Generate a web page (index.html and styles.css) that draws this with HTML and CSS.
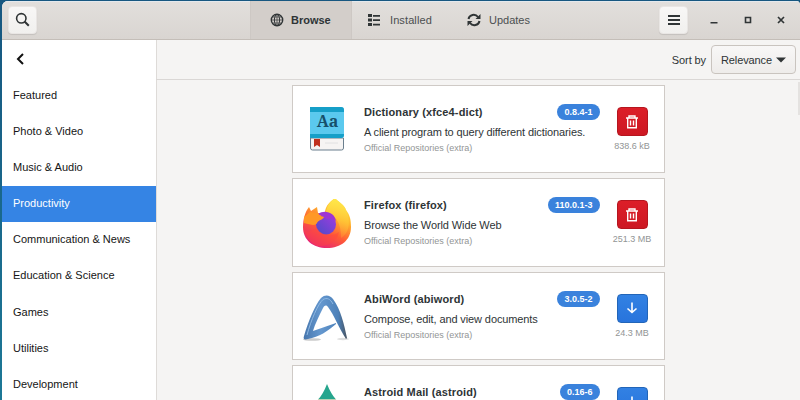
FILE: index.html
```html
<!DOCTYPE html>
<html lang="en">
<head>
  <meta charset="UTF-8">
  <meta name="viewport" content="width=device-width, initial-scale=1.0">
  <title>Software</title>
  <link rel="stylesheet" href="styles.css">
</head>
<body>
  <div class="window">
    <header class="headerbar">
      <div class="header-left">
        <button class="header-btn" aria-label="Search">
          <svg width="16" height="16" viewBox="0 0 16 16" fill="none" stroke="#303536" stroke-width="1.6"><circle cx="6.3" cy="6.3" r="4.7"/><path d="M9.500 9.500l4.300 4.300" stroke-width="2"/></svg>
        </button>
      </div>
      <nav class="tabs">
        <a class="tab active">
          <svg width="14" height="14" viewBox="0 0 14 14" fill="none" stroke="#303536" stroke-width="1"><circle cx="7" cy="7" r="5.700" stroke-width="1.400"/><ellipse cx="7" cy="7" rx="2.600" ry="5.500"/><path d="M7 1v12M1 7h12M2.500 4h9M2.500 10h9" stroke-width=".7"/></svg>
          <span>Browse</span>
        </a>
        <a class="tab tab-installed">
          <svg width="14" height="14" viewBox="0 0 14 14" fill="#303536"><path d="M1 1h4v3H1zM1 5.500h4v3H1zM1 10h4v3H1zM6 2h7v1.700H6zM6 6.300h7V8H6zM6 10.800h7v1.700H6z"/></svg>
          <span>Installed</span>
        </a>
        <a class="tab tab-updates">
          <svg width="14" height="14" viewBox="0 0 14 14" fill="none" stroke="#303536" stroke-width="2"><path d="M1.500 6C2.300 1.700 8.200.3 11 4M12.500 8C11.700 12.300 5.800 13.700 3 10"/><path d="M13.500 1v5h-5zM.5 13V8h5z" fill="#303536" stroke="none"/></svg>
          <span>Updates</span>
        </a>
      </nav>
      <div class="header-right">
        <button class="header-btn" aria-label="Menu">
          <svg width="14" height="12" viewBox="0 0 14 12" stroke="#303536" stroke-width="1.900"><path d="M1 2h12M1 6h12M1 10h12"/></svg>
        </button>
        <div class="window-controls">
          <svg width="10" height="10" viewBox="0 0 10 10" stroke="#303536" stroke-width="1.500"><path d="M1.500 7.700h7"/></svg>
          <svg width="10" height="10" viewBox="0 0 10 10" fill="none" stroke="#303536" stroke-width="1.600"><path d="M2.500 2.500h5v5h-5z"/></svg>
          <svg width="10" height="10" viewBox="0 0 10 10" stroke="#303536" stroke-width="1.700"><path d="M2 2l6 6M8 2l-6 6"/></svg>
        </div>
      </div>
    </header>

    <div class="main">
      <aside class="sidebar">
        <div class="back">
          <svg width="10" height="12" viewBox="0 0 10 12" fill="none" stroke="#111" stroke-width="2"><path d="M8 1L3 6l5 5"/></svg>
        </div>
        <ul class="categories">
          <li>Featured</li>
          <li>Photo &amp; Video</li>
          <li>Music &amp; Audio</li>
          <li class="selected">Productivity</li>
          <li>Communication &amp; News</li>
          <li>Education &amp; Science</li>
          <li>Games</li>
          <li>Utilities</li>
          <li>Development</li>
        </ul>
      </aside>

      <section class="content">
        <div class="toolbar">
          <span class="sort-label">Sort by</span>
          <button class="sort-btn">
            <span>Relevance</span>
            <svg width="10" height="6" viewBox="0 0 10 6" fill="#303536"><path d="M0 .5h10L5 5.500z"/></svg>
          </button>
        </div>

        <div class="app-list">
          <article class="card">
            <svg class="app-icon" width="48" height="48" viewBox="0 0 48 48">
              <path d="M7.500 32h33v10q0 2-2 2h-29q-2 0-2-2z" fill="#f6f4f3" stroke="#6b7f8e"/>
              <path d="M7 1h31q3 0 3 3v25q0 3-3 3H7z" fill="#5bc9ee"/>
              <path d="M7 1h31q3 0 3 3v2H7zM7 28h34v1q0 3-3 3H7z" fill="#169fc8"/>
              <path d="M11 33h6v8l-3-2-3 2z" fill="#c0301e"/>
              <path d="M22 37h13" stroke="#ddd" stroke-width=".8"/>
              <text x="24.500" y="21" class="dict-text" text-anchor="middle">Aa</text>
            </svg>
            <div class="info">
              <h2>Dictionary (xfce4-dict)</h2>
              <p class="summary">A client program to query different dictionaries.</p>
              <p class="repo">Official Repositories (extra)</p>
            </div>
            <span class="version">0.8.4-1</span>
            <div class="action">
              <button class="remove" aria-label="Remove">
                <svg width="14" height="16" viewBox="0 0 14 16" fill="none" stroke="#fff" stroke-width="1.400"><path d="M1 4h12M4 4V2h6v2M2.700 4.500v9.300h8.600V4.500M5.500 6.500v5M8.500 6.500v5"/></svg>
              </button>
              <span class="size">838.6 kB</span>
            </div>
          </article>

          <article class="card">
            <svg class="app-icon" width="50" height="52" viewBox="0 0 50 52">
              <defs>
                <linearGradient id="fox" x1=".85" y1="0" x2=".3" y2="1">
                  <stop offset="0" stop-color="#fff04a"/>
                  <stop offset=".35" stop-color="#ffb22c"/>
                  <stop offset=".65" stop-color="#ff5b36"/>
                  <stop offset="1" stop-color="#e4207a"/>
                </linearGradient>
                <linearGradient id="globe" x1="1" y1="0" x2="0" y2="1">
                  <stop offset="0" stop-color="#a33ae0"/>
                  <stop offset="1" stop-color="#4a4cc8"/>
                </linearGradient>
                <linearGradient id="flame" x1="0" y1="0" x2="0" y2="1">
                  <stop offset="0" stop-color="#ffe84a"/>
                  <stop offset="1" stop-color="#ffc234" stop-opacity=".2"/>
                </linearGradient>
              </defs>
              <path d="M33-1c3 4 9 6 11 12 4 5 5 10 5 17 0 13-10 21-24 21S1 41 1 28C1 20 3 13 7 8l2 4 6-4 1 6h7c0-6 4-11 10-15z" fill="url(#fox)"/>
              <path d="M33-1c3 4 9 6 11 12 4 8 5 22-5 28 0-9-2-17-6-20-4-3-7-3-9-5 0-6 4-11 9-15z" fill="url(#flame)"/>
              <circle cx="24" cy="25.500" r="10" fill="url(#globe)"/>
              <path d="M16 15c7-5 17-1 18 7-4-3-6-2-9-2z" fill="#9e35d4"/>
              <path d="M2 18l6-5 8 1c1 2 2 3 6 4-1 3-6 3-7 6-1 3-6 2-13 0z" fill="#ff9826"/>
              <path d="M2 28c2 7 5 5 13 1 4 8 16 9 22 4-2 11-13 15-22 14C8 44 2 36 2 28z" fill="#ff463f" opacity=".45"/>
            </svg>
            <div class="info">
              <h2>Firefox (firefox)</h2>
              <p class="summary">Browse the World Wide Web</p>
              <p class="repo">Official Repositories (extra)</p>
            </div>
            <span class="version">110.0.1-3</span>
            <div class="action">
              <button class="remove" aria-label="Remove">
                <svg width="14" height="16" viewBox="0 0 14 16" fill="none" stroke="#fff" stroke-width="1.400"><path d="M1 4h12M4 4V2h6v2M2.700 4.500v9.300h8.600V4.500M5.500 6.500v5M8.500 6.500v5"/></svg>
              </button>
              <span class="size">251.3 MB</span>
            </div>
          </article>

          <article class="card">
            <svg class="app-icon" width="48" height="48" viewBox="0 0 48 48">
              <defs>
                <linearGradient id="abi" x1="0" y1="0" x2="1" y2="0">
                  <stop offset="0" stop-color="#4776ad"/>
                  <stop offset=".4" stop-color="#6598cf"/>
                  <stop offset=".8" stop-color="#4c80b8"/>
                  <stop offset="1" stop-color="#49535f"/>
                </linearGradient>
              </defs>
              <ellipse cx="9" cy="46.500" rx="9" ry="1.300" fill="#ccc"/>
              <ellipse cx="40" cy="46" rx="6" ry="1.200" fill="#ddd"/>
              <path d="M1 43C5 29 12 12 18 5c4-4 9-3 12 1 8 11 11 25 14 39l-1 1C36 35 31 22 25 14c-2-2-3-2-5 1-4 8-8 16-10 23l23-8v1C25 38 16 44 5 46c-4 1-5 0-4-3z" fill="url(#abi)"/>
              <path d="M4 42C8 27 15 11 20 6.500c4-2 7-1 10 4.500" fill="none" stroke="#8fb9e3" stroke-width="1"/>
            </svg>
            <div class="info">
              <h2>AbiWord (abiword)</h2>
              <p class="summary">Compose, edit, and view documents</p>
              <p class="repo">Official Repositories (extra)</p>
            </div>
            <span class="version">3.0.5-2</span>
            <div class="action">
              <button class="install" aria-label="Install">
                <svg width="14" height="14" viewBox="0 0 14 14" fill="none" stroke="#fff" stroke-width="1.600"><path d="M7 1.500v10M2.500 7.500L7 11.500l4.500-4"/></svg>
              </button>
              <span class="size">24.3 MB</span>
            </div>
          </article>

          <article class="card">
            <svg class="app-icon astroid" width="48" height="48" viewBox="0 0 48 48">
              <path d="M24-3q4 10 9 15.500H15q5-5 9-15.500z" fill="#26a58d"/>
              <path d="M15 12.500h18l4 14H11z" fill="#e3d3a4"/>
            </svg>
            <div class="info">
              <h2>Astroid Mail (astroid)</h2>
            </div>
            <span class="version">0.16-6</span>
            <div class="action">
              <button class="install" aria-label="Install">
                <svg width="14" height="14" viewBox="0 0 14 14" fill="none" stroke="#fff" stroke-width="1.600"><path d="M7 1.500v10M2.500 7.500L7 11.500l4.500-4"/></svg>
              </button>
            </div>
          </article>
        </div>
        <div class="scrollbar"></div>
      </section>
    </div>
  </div>
</body>
</html>
```
FILE: styles.css
```css
* {
  margin: 0;
  padding: 0;
  box-sizing: border-box;
}

body {
  width: 800px;
  height: 400px;
  padding: 1px 0 0 2px;
  overflow: hidden;
  background: linear-gradient(to bottom, #175780, #1c7896);
  font-family: "Liberation Sans", Arial, sans-serif;
  font-size: 11px;
  color: #2e3436;
}

button {
  font: inherit;
  color: inherit;
}

svg {
  display: block;
  flex: none;
}

.window {
  height: 399px;
  display: flex;
  flex-direction: column;
  border-radius: 6px 4px 0 0;
  overflow: hidden;
  background: #f5f4f3;
}

/* Header bar */
.headerbar {
  flex: none;
  height: 39px;
  display: grid;
  grid-template-columns: 248px 1fr 141px;
  background: linear-gradient(to bottom, #e2dfdc, #d9d5d1);
  border-bottom: 1px solid #c4beb8;
  box-shadow: inset 0 1px #e4e9ed;
}

.header-left {
  display: flex;
  align-items: center;
  padding-left: 6px;
}

.header-btn {
  width: 29px;
  height: 28px;
  display: flex;
  align-items: center;
  justify-content: center;
  border: 1px solid #e9e6e4;
  border-radius: 4px;
  background: linear-gradient(to bottom, #f8f7f6, #f1f0ee);
  box-shadow: 0 1px 1px rgba(0, 0, 0, 0.1);
}

.tabs {
  display: flex;
}

.tab {
  display: flex;
  align-items: center;
  gap: 7px;
  color: #4b4f50;
}

.tab.active {
  width: 102px;
  padding-left: 19px;
  border-left: 1px solid #cdc8c4;
  border-right: 1px solid #cdc8c4;
  background: #d3ceca;
  color: #2e3436;
  font-weight: bold;
}

.tab-installed {
  width: 99px;
  padding-left: 15px;
  gap: 9px;
  letter-spacing: 0.1px;
}

.tab-updates {
  padding-left: 16px;
  gap: 8px;
}

.header-right {
  display: flex;
  align-items: center;
}

.window-controls {
  display: flex;
  gap: 23.5px;
  margin-left: 21px;
}

.main {
  flex: 1;
  min-height: 0;
  display: flex;
}

/* Sidebar */
.sidebar {
  flex: none;
  width: 154px;
  background: #fff;
  box-shadow: 1px 0 #dedbd8;
  color: #151515;
}

.back {
  height: 38px;
  padding: 13px 0 0 13px;
}

.categories {
  list-style: none;
}

.categories li {
  height: 36.1px;
  padding-left: 11px;
  line-height: 35.4px;
}

.categories .selected {
  background: #3584e4;
  color: #fff;
}

/* Content */
.content {
  position: relative;
  flex: 1;
  min-width: 0;
}

.toolbar {
  height: 40px;
  display: flex;
  align-items: center;
  justify-content: flex-end;
  gap: 5px;
  padding-right: 4px;
  border-bottom: 1px solid #dad7d5;
}

.sort-label {
  letter-spacing: -0.1px;
}

.sort-btn {
  width: 85px;
  height: 29px;
  display: flex;
  align-items: center;
  justify-content: center;
  gap: 4px;
  border: 1px solid #c9c4bf;
  border-radius: 4px;
  background: linear-gradient(to bottom, #f8f7f7, #eeecea);
  letter-spacing: -0.1px;
}

.app-list {
  width: 373px;
  margin: 5px auto 0;
  display: flex;
  flex-direction: column;
  gap: 5.2px;
}

.card {
  flex: none;
  height: 88.2px;
  display: flex;
  align-items: flex-start;
  padding-top: 19px;
  padding-right: 14px;
  border: 1px solid #cfcac6;
  background: #fff;
}

.app-icon {
  width: 50px;
  margin: 1px 12px 0 9px;
}

.dict-text {
  font: bold 16px "Noto Serif", "Liberation Serif", serif;
  fill: #17506a;
}

.info {
  flex: 1;
  min-width: 0;
  padding-left: 0.5px;
  white-space: nowrap;
}

.info h2 {
  font-size: 11px;
  line-height: 14px;
  letter-spacing: 0.13px;
}

.summary {
  margin-top: 6px;
  line-height: 14px;
  letter-spacing: -0.11px;
}

.repo {
  margin-top: 3px;
  font-size: 9px;
  line-height: 12px;
  color: #929595;
}

.version {
  height: 16px;
  margin-top: -1px;
  padding: 0 7px;
  border-radius: 8px;
  background: #3a82dc;
  color: #fff;
  font-size: 9px;
  font-weight: bold;
  line-height: 16px;
}

.action {
  width: 39px;
  margin: 2px -2px 0 13px;
  display: flex;
  flex-direction: column;
  align-items: center;
}

.action button {
  width: 31px;
  height: 29px;
  display: flex;
  align-items: center;
  justify-content: center;
  border-radius: 4px;
}

.remove {
  border: 1px solid #b5161f;
  background: linear-gradient(to bottom, #dc1e28, #cd1823);
}

.install {
  border: 1px solid #2265b8;
  background: linear-gradient(to bottom, #3281e3, #2874dc);
}

.size {
  margin-top: 4px;
  font-size: 9px;
  line-height: 12px;
  white-space: nowrap;
  color: #929595;
}

.astroid {
  margin-top: 2px;
  overflow: visible;
}

.scrollbar {
  position: absolute;
  top: 42px;
  right: 0;
  width: 2px;
  height: 33px;
  background: #e4e2e0;
}
```
